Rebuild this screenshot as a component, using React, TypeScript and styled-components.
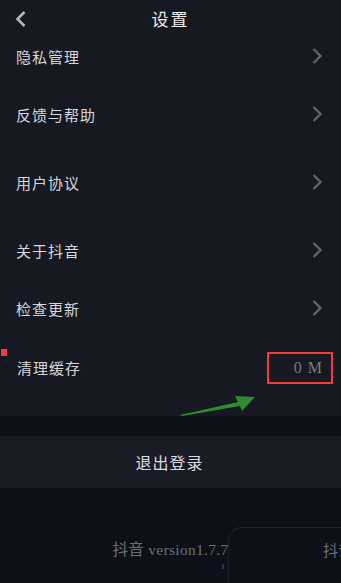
import React from 'react';
import styled, { createGlobalStyle } from 'styled-components';

const GlobalStyle = createGlobalStyle`
  html, body {
    margin: 0;
    padding: 0;
    background: #0e1019;
  }
  * {
    box-sizing: border-box;
  }
`;

const fontStack = `"Liberation Serif", "Noto Sans CJK SC", serif`;

const Page = styled.div`
  position: relative;
  width: 341px;
  height: 583px;
  overflow: hidden;
  background: #0e1019;
  font-family: ${fontStack};
  display: flex;
  flex-direction: column;
`;

const Panel = styled.div`
  background: #171922;
  display: flex;
  flex-direction: column;
  padding-bottom: 29px;
`;

const Header = styled.div`
  position: relative;
  height: 36px;
  display: flex;
  align-items: center;
  justify-content: center;
`;

const BackButton = styled.div`
  position: absolute;
  left: 14px;
  top: 10px;
  width: 16px;
  height: 18px;
  display: flex;
  align-items: center;
`;

const Title = styled.h1`
  margin: 0;
  font-size: 17px;
  font-weight: 400;
  letter-spacing: 2px;
  color: #ececee;
`;

const Row = styled.div<{ $space: number }>`
  height: 40px;
  margin-top: ${(p) => p.$space}px;
  display: flex;
  align-items: center;
  justify-content: space-between;
  padding: 0 18px 0 16px;
`;

const Label = styled.span`
  font-size: 15px;
  letter-spacing: 1px;
  color: #d6d7da;
`;

const CacheLabel = styled(Label)`
  padding-left: 1px;
`;

const CacheValue = styled.div`
  width: 66px;
  height: 32px;
  margin-right: -10px;
  margin-top: 2px;
  border: 2.5px solid #f23b3c;
  display: flex;
  align-items: center;
  justify-content: flex-end;
  padding-right: 8px;
  font-size: 16px;
  color: #7a7c82;
  letter-spacing: 1px;
`;

const Marker = styled.span`
  position: absolute;
  left: 1px;
  top: 349px;
  width: 6px;
  height: 7px;
  background: #f23b3c;
`;

const Band = styled.div`
  height: 20px;
  background: #0f1119;
`;

const Logout = styled.div`
  height: 52px;
  background: #191b25;
  display: flex;
  align-items: center;
  justify-content: center;
  font-size: 16px;
  letter-spacing: 1px;
  color: #dcdde0;
  padding-right: 2px;
`;

const Footer = styled.div`
  flex: 1;
  background: #0e1019;
  display: flex;
  justify-content: center;
  padding-top: 49px;
`;

const Version = styled.span`
  font-size: 15.5px;
  letter-spacing: 0.3px;
  color: #6c6e74;
`;

const Toast = styled.div`
  position: absolute;
  left: 228px;
  top: 527px;
  width: 140px;
  height: 80px;
  border-top: 1.5px solid #23252e;
  border-left: 1.5px solid #1d1f28;
  border-radius: 14px 0 0 0;
  background: #0e1019;
  padding: 11px 0 0 94px;
  font-size: 15px;
  color: #6c6e74;
  white-space: nowrap;
`;

const Tick = styled.span`
  position: absolute;
  left: 222px;
  top: 562px;
  font-size: 10px;
  color: #9a9ca2;
`;

const Arrow = styled.svg`
  position: absolute;
  left: 178px;
  top: 392px;
`;

const ChevronRight = () => (
  <svg width="12" height="18" viewBox="0 0 12 18">
    <path d="M2.5 2 L9.5 9 L2.5 16" fill="none" stroke="#62646c" strokeWidth="2.4" />
  </svg>
);

const ChevronLeft = () => (
  <svg width="14" height="18" viewBox="0 0 14 18">
    <path d="M10.5 2 L3.5 9 L10.5 16" fill="none" stroke="#b4b6bb" strokeWidth="2.6" />
  </svg>
);

const items = [
  { label: '隐私管理', space: 0 },
  { label: '反馈与帮助', space: 18 },
  { label: '用户协议', space: 28 },
  { label: '关于抖音', space: 28 },
  { label: '检查更新', space: 18 },
];

export default function App() {
  return (
    <>
      <GlobalStyle />
      <Page>
        <Panel>
          <Header>
            <BackButton>
              <ChevronLeft />
            </BackButton>
            <Title>设置</Title>
          </Header>
          {items.map((item) => (
            <Row key={item.label} $space={item.space}>
              <Label>{item.label}</Label>
              <ChevronRight />
            </Row>
          ))}
          <Row $space={19}>
            <CacheLabel>清理缓存</CacheLabel>
            <CacheValue>0 M</CacheValue>
          </Row>
        </Panel>
        <Band />
        <Logout>退出登录</Logout>
        <Footer>
          <Version>抖音 version1.7.7</Version>
        </Footer>
        <Marker />
        <Toast>抖音</Toast>
        <Tick>ʲ</Tick>
        <Arrow width="80" height="26" viewBox="0 0 80 26">
          <polygon points="2,23 60,10 57,4 77,5 64,19 62,14 4,24" fill="#2e8b2e" />
        </Arrow>
      </Page>
    </>
  );
}
